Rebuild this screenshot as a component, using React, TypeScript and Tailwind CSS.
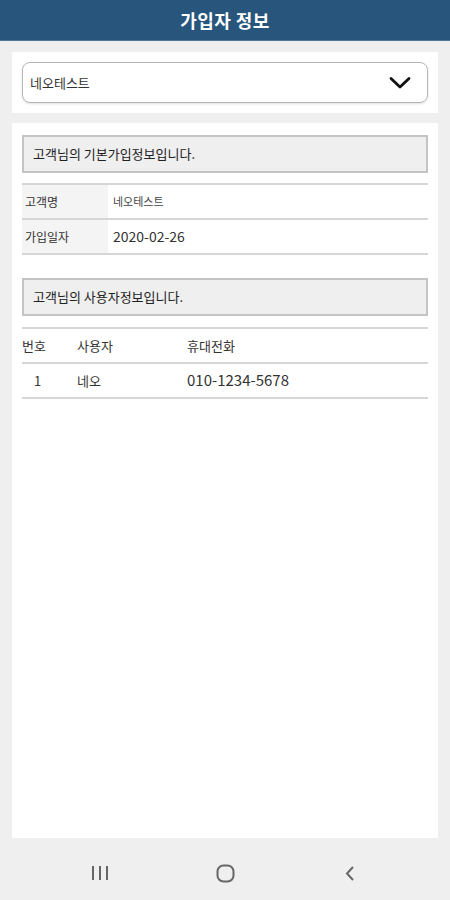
import React from "react";

const font = { fontFamily: '"Noto Sans CJK KR", "Noto Sans", sans-serif' };

function SectionTitle({ children }: { children: React.ReactNode }) {
  return (
    <div className="h-[38px] bg-[#efefef] border-2 border-[#c4c4c4] flex items-center pl-[9px] text-[13px] text-[#222]">
      {children}
    </div>
  );
}

export default function App() {
  return (
    <div className="w-[450px] h-[900px] bg-[#efefef] flex flex-col" style={font}>
      <header className="h-[41px] bg-[#27557b] border-b border-[#4d7595] flex items-center justify-center">
        <h1 className="text-white text-[18px] font-bold tracking-wide">가입자 정보</h1>
      </header>

      <main className="flex-1 flex flex-col gap-[10px] px-[12px] pt-[11px]">
        <section className="bg-white px-[10px] py-[10px]">
          <div className="h-[41px] border border-[#b5b5b5] rounded-[8px] flex items-center justify-between pl-[7px] pr-[16px] shadow-sm">
            <span className="text-[13px] text-[#333]">네오테스트</span>
            <svg width="22" height="14" viewBox="0 0 22 14" fill="none">
              <path d="M2 2.5 L11 11 L20 2.5" stroke="#111" strokeWidth="2.8" strokeLinecap="round" strokeLinejoin="round" />
            </svg>
          </div>
        </section>

        <section className="flex-1 bg-white px-[10px] pt-[12px]">
          <SectionTitle>고객님의 기본가입정보입니다.</SectionTitle>

          <div className="mt-[10px] border-t-2 border-[#d6d6d6]">
            <div className="flex h-[35px] border-b-2 border-[#d6d6d6]">
              <div className="w-[86px] bg-[#f4f4f4] flex items-center pl-[3px] text-[12px] text-[#333]">고객명</div>
              <div className="flex-1 flex items-center pl-[5px] text-[11px] text-[#444]">네오테스트</div>
            </div>
            <div className="flex h-[35px] border-b-2 border-[#d6d6d6]">
              <div className="w-[86px] bg-[#f4f4f4] flex items-center pl-[3px] text-[12px] text-[#333]">가입일자</div>
              <div className="flex-1 flex items-center pl-[5px] text-[14px] text-[#333]">2020-02-26</div>
            </div>
          </div>

          <div className="mt-[23px]">
            <SectionTitle>고객님의 사용자정보입니다.</SectionTitle>
          </div>

          <div className="mt-[11px] border-t-2 border-[#d6d6d6]">
            <div className="flex h-[35px] items-center border-b-2 border-[#d6d6d6] text-[13px] text-[#333]">
              <div className="w-[55px]">번호</div>
              <div className="w-[110px]">사용자</div>
              <div className="flex-1">휴대전화</div>
            </div>
            <div className="flex h-[35px] items-center border-b-2 border-[#d6d6d6] text-[13px] text-[#333]">
              <div className="w-[55px] pl-[12px]">1</div>
              <div className="w-[110px]">네오</div>
              <div className="flex-1 text-[15px]">010-1234-5678</div>
            </div>
          </div>
        </section>
      </main>

      <nav className="h-[62px] flex items-start justify-between px-[75px] pt-[27px]">
        <div className="w-[50px] flex justify-center">
          <svg width="18" height="16" viewBox="0 0 18 16">
            <path d="M2 1v14M9 1v14M16 1v14" stroke="#666" strokeWidth="2" />
          </svg>
        </div>
        <div className="w-[50px] flex justify-center -mt-[1px]">
          <svg width="19" height="19" viewBox="0 0 19 19">
            <rect x="1.5" y="1.5" width="16" height="16" rx="6" fill="none" stroke="#666" strokeWidth="2" />
          </svg>
        </div>
        <div className="w-[50px] flex justify-center">
          <svg width="12" height="18" viewBox="0 0 12 18">
            <path d="M9 2 L3 8.5 L9 15" fill="none" stroke="#666" strokeWidth="2" />
          </svg>
        </div>
      </nav>
    </div>
  );
}
